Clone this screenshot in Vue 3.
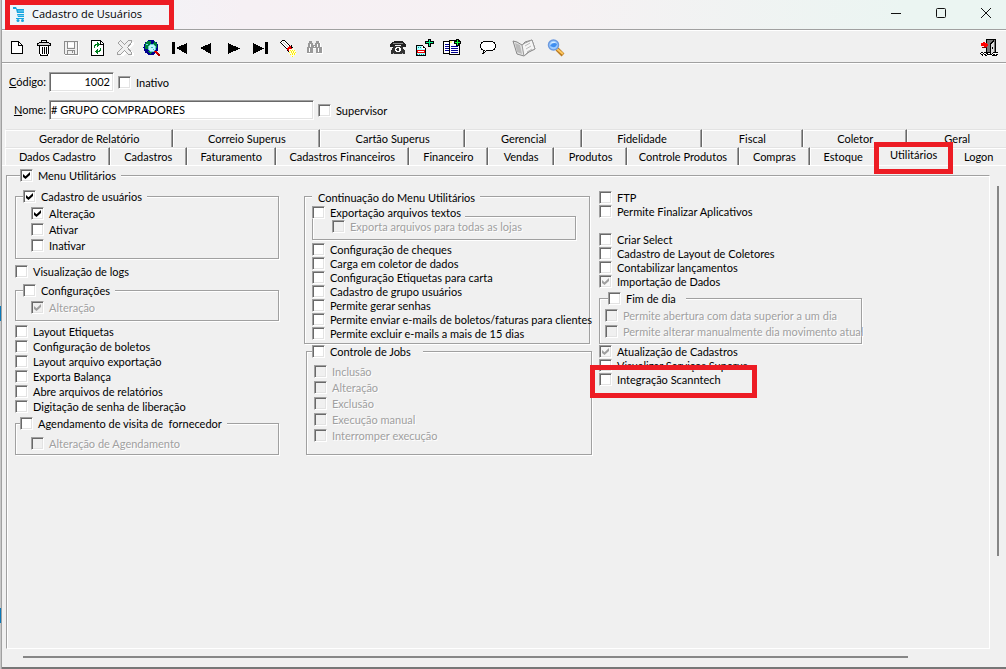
<script setup>
import { ref } from 'vue'

const backTabs = [
  ['Gerador de Relatório', 169], ['Correio Superus', 147], ['Cartão Superus', 145], ['Gerencial', 117],
  ['Fidelidade', 119], ['Fiscal', 101], ['Coletor', 104], ['Geral', 99],
]
const frontTabs = [
  ['Dados Cadastro', 105], ['Cadastros', 77], ['Faturamento', 89], ['Cadastros Financeiros', 134],
  ['Financeiro', 79], ['Vendas', 66], ['Produtos', 72], ['Controle Produtos', 113],
  ['Compras', 70], ['Estoque', 67], ['Utilitários', 73], ['Logon', 56],
]
const active = ref('Utilitários')
const codigo = ref('1002')
const nome = ref('# GRUPO COMPRADORES')

const userRows = [['Alteração', true], ['Ativar', false], ['Inativar', false]]
const layoutRows = ['Layout Etiquetas', 'Configuração de boletos', 'Layout arquivo exportação', 'Exporta Balança', 'Abre arquivos de relatórios', 'Digitação de senha de liberação']
const menuRows = ['Configuração de cheques', 'Carga em coletor de dados', 'Configuração Etiquetas para carta', 'Cadastro de grupo usuários', 'Permite gerar senhas', 'Permite enviar e-mails de boletos/faturas para clientes', 'Permite excluir e-mails a mais de 15 dias']
const jobRows = ['Inclusão', 'Alteração', 'Exclusão', 'Execução manual', 'Interromper execução']
const selectRows = ['Criar Select', 'Cadastro de Layout de Coletores', 'Contabilizar lançamentos']
const dayRows = ['Permite abertura com data superior a um dia', 'Permite alterar manualmente dia movimento atual']

const tools = [
  { name: 'Novo', art: '<path d="M3.5 2.5h7l4 4v8h-11z" fill="#fff" stroke="#000"/><path d="M10.5 2.5v4h4" fill="none" stroke="#000"/>' },
  { name: 'Excluir', art: '<path d="M4 6h11v11H4z" fill="#fff"/><path d="M6 1h6v1H6zM6 2h1v2H6zM11 2h1v2h-1zM4 3h10v1H4zM2 4h2v1H2zM14 4h2v1h-2zM2 5h1v1H2zM15 5h1v1h-1zM2 6h14v1H2zM4 7h1v8H4zM13 7h1v8h-1zM5 15h1v2H5zM12 15h1v2h-1zM5 16h8v1H5zM7 8h1v7H7zM9 8h1v7H9zM11 8h1v7h-1z"/><path d="M4 4h10v1H4zM3 5h12v1H3z" fill="#d8d8d8"/>' },
  { name: 'Gravar', art: '<path d="M3 16.500h13.500V3" fill="none" stroke="#fff"/><path d="M2.500 2.500h13v13h-12l-1-1zM5.500 3v6h7V3M5.500 15v-4h7v4M10.500 12v2" fill="none" stroke="#8c8c8c"/><path d="M6 4h6v4H6z" fill="#fff"/>' },
  { name: 'Atualizar', art: '<path d="M2.500 1.500h9l3 3v12h-12z" fill="#fff" stroke="#000"/><path d="M11.500 2v3h3" fill="none" stroke="#000"/><path d="M5 9V6h1V5h2V3h1v1h1v1h1v1h-1v1H9v1H8V6H7v1H6v2zM12 9v3h-1v1H9v2H8v-1H7v-1H6v-1h1v-1h1v-1h1v2h1v-1h1V9z" fill="#008020"/>' },
  { name: 'Cancelar', art: '<path d="M3 3l2-1 5 5 4-5h3v2l-5 5 5 5v2h-2l-5-4-4 4H3v-2l4-5-4-5z" fill="#fff" transform="translate(1 1)"/><path d="M2.500 3.500l2-2 4 4 4-4h3v2l-4 5 4 5v2h-3l-4-4-4 4h-3v-2l5-5-4-4z" fill="#f0f0f0" stroke="#a0a0a0"/>' },
  { name: 'Consultar', art: '<circle cx="8" cy="8.500" r="7.500" fill="#000090"/><path d="M4 2h4v3H7v2H5v3H2V5zM11 2l3 3v4h-2V6h-2zM4 12h3l2 2-2 1z" fill="#007f3b"/><path d="M3 5h2v1H3z" fill="#7cf"/><circle cx="9" cy="9" r="3.500" fill="#bff6ff" stroke="#6cc"/><path d="M8 8h2v1H8zM10 10h1v1h-1z" fill="#3bb"/><path d="M11.500 12l4.500 4" stroke="#d00" stroke-width="2"/><path d="M15 15l2 2" stroke="#a00" stroke-width="2"/>' },
  { name: 'Primeiro', art: '<path d="M2 3h3v12H2zM17 4v11L6 9z"/>' },
  { name: 'Anterior', art: '<path d="M14 4v11L3 9z"/>' },
  { name: 'Próximo', art: '<path d="M4 4v11l12-5.500z"/>' },
  { name: 'Último', art: '<path d="M14 3h3v12h-3zM2 4v11l11-5.500z"/>' },
  { name: 'Localizar', art: '<path d="M2.500 3.500l2-2h2l6 6-3 3z" fill="#fff" stroke="#000"/><path d="M5 3l6 6" stroke="#bbb"/><path d="M9 10l3-4 3 4-4 3z" fill="#e00"/><path d="M9.500 11.500l2 2M13.500 6v2l2 2" fill="none" stroke="#000"/><path d="M11 10h3v-1h2v2h2v5h-2v2h-3v-2h-2z" fill="#fffde0"/><path d="M12 11h1v1h-1zM14 11h1v1h-1zM16 11h1v1h-1zM11 13h1v1h-1zM13 13h1v1h-1zM15 13h1v1h-1zM17 13h1v1h-1zM12 15h1v1h-1zM14 15h1v1h-1zM16 15h1v1h-1zM14 17h1v1h-1zM13 12h1v1h-1zM15 12h1v1h-1zM14 14h1v1h-1zM16 14h1v1h-1z" fill="#fe0"/>' },
  { name: 'Procurar', art: '<path d="M4 2h3v2h1v2h3V4h1V2h3v2h1v4h2v7h-6v-5H8v5H2V8h1V4h1z" fill="#fff"/><path d="M4 2h3v2h1v2h2V4h1V2h3v2h1v4h2v6h-6v-5H8v5H2V8h1V4h1z" fill="#999"/><path d="M5 5h1v3H5zM12 5h1v3h-1zM4 9h1v4H4zM13 9h1v4h-1zM9 7h1v1H9z" fill="#fff"/>' },
  { name: 'Telefone', gap: 'wide', art: '<path d="M1 6l2-3 3-1h6l3 1 2 3v2h-5V6H6v2H1z" fill="#222"/><path d="M5 7h8l3 5v3H2v-3z" fill="#333"/><path d="M4 4h10v1H4z" fill="#888"/><circle cx="9" cy="10.500" r="3" fill="#fff"/><circle cx="9" cy="10.500" r="1.500" fill="#333"/><path d="M4 14h1v1H4zM13 14h1v1h-1z" fill="#aaa"/>' },
  { name: 'Incluir documento', art: '<path d="M0 6h7v1h1v1h1v1h1v8H0z"/><path d="M1 7h5v3h3v6H1z" fill="#aff"/><path d="M2 8h1v1H2zM4 8h1v1H4zM1 15h1v1H1zM3 15h1v1H3zM5 15h1v1H5zM7 15h1v1H7z" fill="#099"/><path d="M6 7h1v2h2v1H6z" fill="#fff"/><path d="M1 11h8v3H1z" fill="#e00"/><path d="M2 12h6v1H2z" fill="#fff"/><path d="M12 0h3v2h3v3h-3v3h-3V5H9V2h3z"/><path d="M13 1h1v2h3v1h-3v3h-1V4h-3V3h3z" fill="#0e8"/>' },
  { name: 'Copiar documento', art: '<path d="M.5 2.500h8v12h-8z" fill="#fff" stroke="#000"/><path d="M6.500 1.500h10v14h-10z" fill="#fff" stroke="#000"/><path d="M2 5.500h4M2 7.500h4M2 9.500h4M2 11.500h4M8 7.500h7M8 9.500h7M8 11.500h7M8 13.500h7" stroke="#000090"/><path d="M13 0h3v2h2v3h-2v2h-3V5h-2V2h2z"/><path d="M14 1h1v2h2v1h-2v2h-1V4h-2V3h2z" fill="#1f3"/><path d="M7 2h2v2H7z" fill="#ff8"/>' },
  { name: 'Mensagem', gap: 'mid', art: '<path d="M5 2.500h8l2 1 1.500 2v3l-1.500 2-2 1H8l-4 3 1-3-2-1-1.500-2v-3L3 3.500z" fill="#fff" stroke="#000"/>' },
  { name: 'Manual', gap: 'mid', wide: true, art: '<g shape-rendering="auto"><path d="M1 2l4 1 5 3 3-3 7-2 3 9-6 3-5 4-7-2z" fill="#e4e4e4" stroke="#888"/><path d="M10 6l2 11 4-4 7-3-3-9-7 3z" fill="#f5f5f5" stroke="#999"/><path d="M3 4l5 2 2 9-5-2z" fill="#bbb"/><path d="M13 7l5-3M14 10l5-3M15 13l5-3" stroke="#bbb"/></g>' },
  { name: 'Ajuda', gap: 'small', art: '<g shape-rendering="auto"><path d="M10 10l6 6" stroke="#b97a22" stroke-width="4"/><path d="M10 10l6 5" stroke="#ffc860" stroke-width="2"/><circle cx="6.500" cy="6" r="5" fill="#9dccff" stroke="#6d9ade" stroke-width="1.500"/><path d="M3 7q3-5 7-2-1 5-7 2" fill="#3f8ef0"/><path d="M3 5q3-4 6-1-3-1-6 1" fill="#e4f4ff"/></g>' },
  { name: 'Sair', gap: 'end', art: '<path d="M0 13h18v4H1z" fill="#fff"/><path d="M1 13h2v1H1zM4 13h2v1H4zM0 14h1v1H0zM3 14h1v1H3zM6 14h2v1H6zM1 15h2v1H1zM4 15h2v1H4zM7 15h3v1H7zM2 16h1v1H2zM5 16h2v1H5zM14 13h4v1h-4zM13 15h2v1h-2zM16 15h2v1h-2zM12 16h5v1h-5z"/><path d="M6 0h10v14H6z"/><path d="M7 1h8v12H7z" fill="#777"/><path d="M10 4h1V3h1V2h1V1h1v13h-1v1h-1v1h-2z"/><path d="M11 5h1V4h1V3h1v10h-1v1h-1v1h-1z" fill="#ddd"/><path d="M12 8h1v2h-1z"/><path d="M1 4h2V3h2v1h2v1h1v2H7v1H4V7H1z" fill="#f00"/><path d="M2 8h5v1H2z" fill="#700"/>' },
]
</script>

<template>
  <div class="screen">
    <div class="behind"></div>
    <main class="window">
      <header class="titlebar">
        <h1 class="title">
          <svg width="12" height="16" viewBox="0 0 12 16" aria-hidden="true"><path d="M0 1h3l1 2h7v4H4L3 3H0zM4 8h7v3H5zM3 12h8v1H3z" fill="#16a5df" /><path d="M5 5h6M5 9.500h6" stroke="#7ad0f2" /><circle cx="5" cy="14.500" r="1.500" fill="#16a5df" /><circle cx="9.500" cy="14.500" r="1.500" fill="#16a5df" /></svg>
          Cadastro de Usuários
        </h1>
        <div class="controls">
          <button aria-label="Minimizar"><svg width="12" height="12"><path d="M1 6.500h10" /></svg></button>
          <button aria-label="Maximizar"><svg width="12" height="12"><rect x="1.500" y="1.500" width="9" height="9" rx="1" /></svg></button>
          <button aria-label="Fechar"><svg width="12" height="12"><path d="M1 1l10 10M11 1L1 11" /></svg></button>
        </div>
      </header>

      <nav class="toolbar" aria-label="Ferramentas">
        <button v-for="t in tools" :key="t.name" :aria-label="t.name" :class="t.gap">
          <svg :width="t.wide ? 24 : 18" height="18" shape-rendering="crispEdges" v-html="t.art"></svg>
        </button>
      </nav>

      <form class="record" @submit.prevent>
        <div class="field">
          <label class="caption" for="codigo"><u>C</u>ódigo:</label>
          <input id="codigo" v-model="codigo" class="text code" type="text">
          <label class="check"><input type="checkbox">Inativo</label>
        </div>
        <div class="field">
          <label class="caption" for="nome"><u>N</u>ome:</label>
          <input id="nome" v-model="nome" class="text name" type="text">
          <label class="check"><input type="checkbox">Supervisor</label>
        </div>
      </form>

      <div class="tabs" role="tablist">
        <div v-for="(row, i) in [backTabs, frontTabs]" :key="i" class="tabrow">
          <button
            v-for="[name, share] in row" :key="name" role="tab" class="tab"
            :class="{ active: name === active }" :aria-selected="name === active"
            :style="{ flexGrow: share }" @click="active = name"
          >{{ name }}</button>
        </div>
      </div>

      <section class="page">
        <fieldset class="utilities">
          <legend><label class="check"><input type="checkbox" checked>Menu Utilitários</label></legend>
          <div class="columns">
            <div class="col">
              <fieldset class="box">
                <legend><label class="check"><input type="checkbox" checked>Cadastro de usuários</label></legend>
                <div class="rows loose indent">
                  <label v-for="[name, on] in userRows" :key="name" class="check"><input type="checkbox" :checked="on">{{ name }}</label>
                </div>
              </fieldset>
              <label class="check logs"><input type="checkbox">Visualização de logs</label>
              <fieldset class="box">
                <legend><label class="check"><input type="checkbox">Configurações</label></legend>
                <div class="rows loose indent">
                  <label class="check"><input type="checkbox" checked disabled>Alteração</label>
                </div>
              </fieldset>
              <div class="rows medium layouts">
                <label v-for="name in layoutRows" :key="name" class="check"><input type="checkbox">{{ name }}</label>
              </div>
              <fieldset class="box visit">
                <legend><label class="check"><input type="checkbox">Agendamento de visita de&nbsp; fornecedor</label></legend>
                <div class="rows loose indent">
                  <label class="check"><input type="checkbox" disabled>Alteração de Agendamento</label>
                </div>
              </fieldset>
            </div>

            <div class="col">
              <fieldset class="box menu">
                <legend>Continuação do Menu Utilitários</legend>
                <label class="check export"><input type="checkbox">Exportação arquivos textos</label>
                <div class="nested">
                  <label class="check"><input type="checkbox" disabled>Exporta arquivos para todas as lojas</label>
                </div>
                <div class="rows tight">
                  <label v-for="name in menuRows" :key="name" class="check"><input type="checkbox">{{ name }}</label>
                </div>
              </fieldset>
              <fieldset class="box jobs">
                <legend><label class="check"><input type="checkbox">Controle de Jobs</label></legend>
                <div class="rows loose">
                  <label v-for="name in jobRows" :key="name" class="check"><input type="checkbox" disabled>{{ name }}</label>
                </div>
              </fieldset>
            </div>

            <div class="col last">
              <div class="rows tight">
                <label class="check"><input type="checkbox">FTP</label>
                <label class="check"><input type="checkbox">Permite Finalizar Aplicativos</label>
              </div>
              <div class="rows tight selects">
                <label v-for="name in selectRows" :key="name" class="check"><input type="checkbox">{{ name }}</label>
                <label class="check"><input class="mixed" type="checkbox" checked>Importação de Dados</label>
              </div>
              <fieldset class="box day">
                <legend><label class="check"><input type="checkbox">Fim de dia</label></legend>
                <div class="rows loose">
                  <label v-for="name in dayRows" :key="name" class="check"><input type="checkbox" disabled>{{ name }}</label>
                </div>
              </fieldset>
              <div class="rows tight">
                <label class="check"><input class="mixed" type="checkbox" checked>Atualização de Cadastros</label>
                <label class="check"><input type="checkbox">Visualizar Serviços Superus</label>
                <label class="check scanntech"><input type="checkbox">Integração Scanntech</label>
              </div>
            </div>
          </div>
        </fieldset>
        <div class="vtrack"><div class="vthumb"></div></div>
        <div class="htrack"><div class="hthumb"></div></div>
      </section>
    </main>
  </div>
</template>

<style>
body { margin: 0; overflow: hidden; }
</style>

<style scoped>
* { box-sizing: border-box; }
.screen {
  display: flex;
  min-height: 100vh;
  background: #f0f0f0;
  color: #000;
  font: 11px/14px Lato, "Liberation Sans", sans-serif;
}
.behind {
  width: 2px;
  background: linear-gradient(#c8c8c8 306px, #0a78b8 306px 321px, #c8c8c8 321px 608px, #0a78b8 608px 623px, #c8c8c8 623px);
  border-right: 1px solid #a0a0a0;
}
.window {
  flex: 1;
  min-width: 0;
  display: flex;
  flex-direction: column;
  border-bottom: 2px solid #777;
}
button { font: inherit; color: inherit; background: none; border: 0; padding: 0; margin: 0; }

.titlebar {
  display: flex;
  justify-content: space-between;
  height: 30px;
  border-bottom: 1px solid #a0a0a0;
  background: linear-gradient(90deg, #eef6fa, #f6f0f4 24%, #f6f1f3 55%, #ebf5f2 90%);
}
.title {
  position: relative;
  display: flex;
  align-items: center;
  gap: 7px;
  margin: 0;
  padding: 0 32px 2px 11px;
  font: 11px/16px "Open Sans", sans-serif;
}
.title::after, .active::after, .scanntech::after {
  content: "";
  position: absolute;
  z-index: 2;
  border: 5px solid #ed1c24;
  pointer-events: none;
}
.title::after { inset: 0 0 -1px 3px; }
.controls { display: flex; gap: 7px; padding: 0 1px 3px 0; }
.controls button { width: 38px; display: grid; place-items: center; }
.controls svg { fill: none; stroke: #111; }

.toolbar {
  display: flex;
  height: 33px;
  padding: 3px 4px 0 1px;
  border-top: 1px solid #fff;
  border-bottom: 1px solid #a0a0a0;
}
.toolbar button { width: 27px; display: grid; place-content: center; }
.toolbar .wide { margin-left: 57px; }
.toolbar .mid { margin-left: 9px; }
.toolbar .small { margin-left: 5px; }
.toolbar .end { margin-left: auto; }

.record { padding: 8px 0 1px 6px; border-top: 1px solid #fff; }
.field { display: flex; align-items: center; height: 20px; margin-bottom: 8px; }
.caption { width: 38px; margin-right: 3px; text-align: right; }
.text {
  height: 20px;
  margin: 0 4px 0 0;
  padding: 0 3px 2px 1px;
  border: 1px solid;
  border-color: #a0a0a0 #fff #fff #a0a0a0;
  box-shadow: inset 1px 1px #696969, inset -1px -1px #e3e3e3;
  background: #fff;
  color: #000;
  font: inherit;
  outline: 0;
}
.code { width: 65px; text-align: right; }
.name { width: 265px; }

.check { position: relative; display: flex; align-items: flex-start; gap: 5px; height: 13px; white-space: nowrap; }
.check input {
  appearance: none;
  flex: none;
  width: 13px;
  height: 13px;
  margin: 0;
  border: 1px solid;
  border-color: #a0a0a0 #fff #fff #a0a0a0;
  box-shadow: inset 1px 1px #696969, inset -1px -1px #e3e3e3;
  background: #fff;
}
.check input:checked::after {
  content: "";
  display: block;
  width: 7px;
  height: 7px;
  margin: 2px;
  background: #000;
  clip-path: polygon(0 29%, 36% 60%, 100% 0, 100% 43%, 36% 100%, 0 72%);
}
.check input:disabled { background: #f0f0f0; }
.check input.mixed { background: #f8f8f8; }
.check input:disabled::after, .check input.mixed::after { background: #a0a0a0; }
.check:has(input:disabled) { color: #a0a0a0; text-shadow: 1px 1px #fff; }

.tabs { margin-left: 3px; }
.tabrow { display: flex; }
.tab {
  position: relative;
  flex: 1 1 0;
  height: 18px;
  border-top: 1px solid #e3e3e3;
  border-left: 1px solid #fff;
  border-right: 1px solid #696969;
  box-shadow: inset -1px 0 #a0a0a0, inset 0 1px #fff;
  white-space: nowrap;
}
.tab:last-child { border-right: 0; box-shadow: inset 0 1px #fff; }
.active { padding-bottom: 4px; box-shadow: none; border-color: transparent; }
.active::after { inset: -6px -4px -9px -4px; }

.page {
  flex: 1;
  display: grid;
  grid-template-columns: minmax(0, 1fr) 16px;
  grid-template-rows: minmax(0, 1fr) 18px;
  padding-top: 3px;
  border-top: 1px solid #fff;
}
fieldset { min-width: 0; margin: 0; padding: 0; }
legend { height: 13px; padding: 0 5px 0 0; background: #f0f0f0; }
.utilities {
  margin-left: 4px;
  border: 1px solid;
  border-color: #a0a0a0 #fff #fff #a0a0a0;
  box-shadow: inset 1px 1px #fff;
}
.utilities > legend { margin-left: 13px; }
.columns {
  display: grid;
  grid-template-columns: minmax(0, 264px) minmax(0, 288px) minmax(0, 263px);
  column-gap: 25px;
  padding: 8px 8px 0;
}
.col.last { margin: 1px 0 0 -18px; width: 263px; }
.box { border: 1px solid #a0a0a0; box-shadow: 1px 1px #fff, inset 1px 1px #fff; padding: 4px 0 3px; }
.box > legend { margin-left: 7px; }
.rows { display: flex; flex-direction: column; }
.tight .check { height: 14px; }
.medium .check { height: 15px; }
.loose .check { height: 16px; }
.indent { padding-left: 15px; }
.logs { margin: 6px 0; }
.layouts { margin: 4px 0 2px; }
.visit { padding: 7px 0 1px; }
.visit > legend { margin-left: 4px; }
.menu { width: 286px; padding: 3px 7px 2px; }
.menu > legend { margin-left: 0; padding-left: 6px; line-height: 16px; }
.export { z-index: 1; width: 153px; background: #f0f0f0; }
.nested {
  width: 264px;
  margin: -3px 0 3px;
  padding: 3px 0 6px 19px;
  border: 1px solid #a0a0a0;
  box-shadow: 1px 1px #fff, inset 1px 1px #fff;
}
.jobs { width: 286px; margin: 1px 0 0 2px; padding: 7px 7px 9px; }
.jobs > legend { margin-left: -2px; padding-right: 12px; }
.selects { margin: 14px 0 3px; }
.day { margin-bottom: 1px; padding: 4px 5px 2px; }
.day > legend { margin-left: 3px; padding-right: 10px; }
.scanntech { width: 146px; }
.scanntech::after { inset: -8px -12px -11px -9px; }

.vtrack { padding: 17px 0 0 7px; }
.vthumb { width: 2px; height: 80%; background: #868686; }
.htrack { padding: 7px 5px 0 21px; }
.hthumb { width: 92%; height: 2px; background: #868686; }
</style>
